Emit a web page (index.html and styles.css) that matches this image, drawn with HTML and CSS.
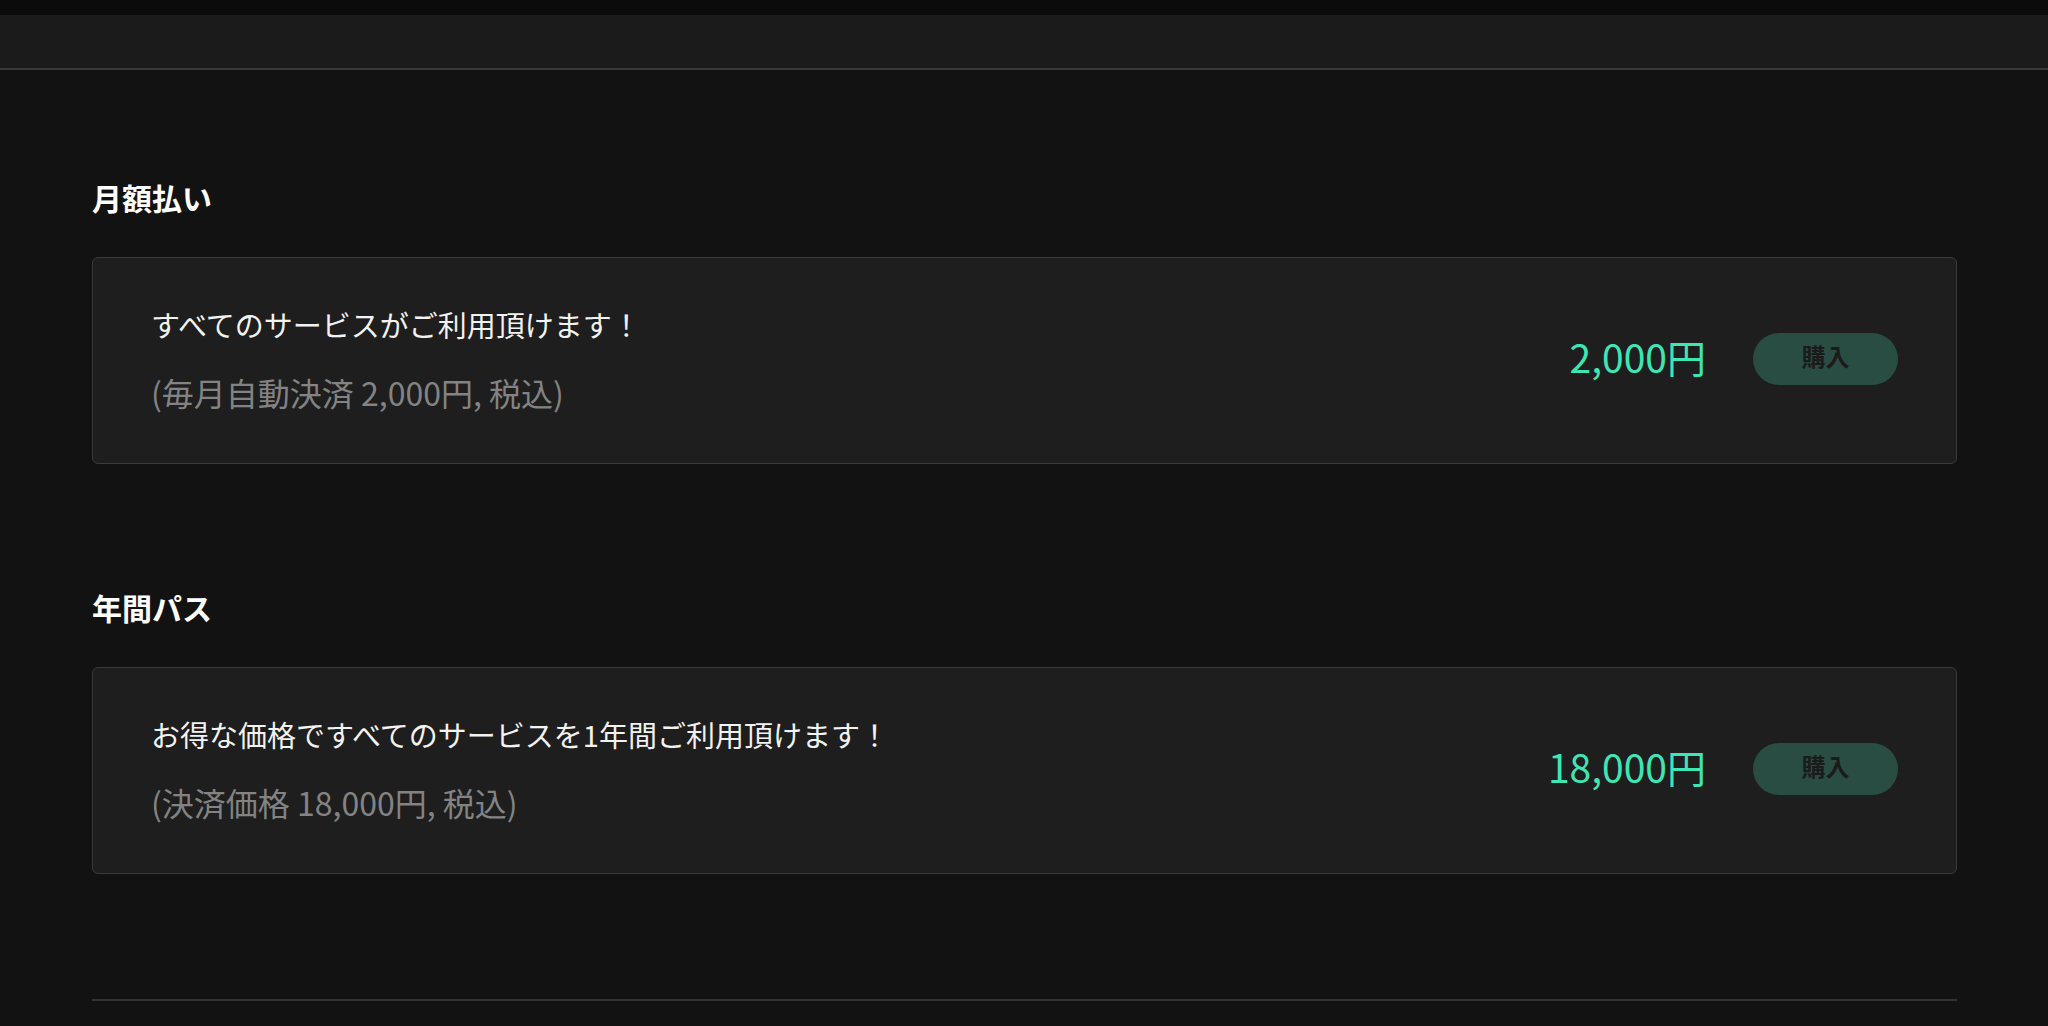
FILE: index.html
```html
<!DOCTYPE html>
<html lang="ja">
<head>
    <meta charset="UTF-8">
    <meta name="viewport" content="width=device-width, initial-scale=1.0">
    <title>プラン</title>
    <link rel="stylesheet" href="styles.css">
</head>
<body>
    <div class="topbar"></div>
    <div class="header"></div>

    <div class="plans">
        <div class="plan-section">
            <h2>月額払い</h2>
            <div class="plan-card">
                <div class="plan-info">
                    <p class="plan-title">すべてのサービスがご利用頂けます！</p>
                    <p class="plan-note">(毎月自動決済 2,000円, 税込)</p>
                </div>
                <div class="plan-buy">
                    <span class="plan-price">2,000円</span>
                    <button class="buy-btn">購入</button>
                </div>
            </div>
        </div>

        <div class="plan-section">
            <h2>年間パス</h2>
            <div class="plan-card">
                <div class="plan-info">
                    <p class="plan-title">お得な価格ですべてのサービスを1年間ご利用頂けます！</p>
                    <p class="plan-note">(決済価格 18,000円, 税込)</p>
                </div>
                <div class="plan-buy">
                    <span class="plan-price">18,000円</span>
                    <button class="buy-btn">購入</button>
                </div>
            </div>
        </div>

        <hr class="divider">
    </div>
</body>
</html>
```

FILE: styles.css
```css
body {
    font-family: "Noto Sans CJK JP", "Noto Sans", sans-serif;
    margin: 0;
    padding: 0;
    background-color: #121212;
    color: #ffffff;
    min-height: 100vh;
}

.topbar {
    height: 15px;
    background-color: #0b0b0b;
}

.header {
    height: 53px;
    background-color: #1b1b1b;
    border-bottom: 2px solid #3a3a3a;
}

.plans {
    padding: 107px 91px 0 92px;
}

.plan-section + .plan-section {
    margin-top: 123px;
}

    .plan-section h2 {
        margin: 0 0 40px;
        font-size: 30px;
        line-height: 40px;
        font-weight: 700;
        color: #ffffff;
    }

.plan-card {
    display: flex;
    align-items: center;
    justify-content: space-between;
    padding: 46px 58px 49px;
    background-color: #1e1e1e;
    border: 1px solid #3a3a3a;
    border-radius: 6px;
}

    .plan-card p {
        margin: 0;
    }

.plan-title {
    font-size: 29px;
    line-height: 40px;
    color: #f2f2f2;
}

.plan-note {
    margin-top: 26px !important;
    font-size: 32px;
    line-height: 44px;
    color: #838383;
}

.plan-buy {
    display: flex;
    align-items: center;
    gap: 47px;
}

.plan-price {
    padding-bottom: 6px;
    font-size: 39px;
    line-height: 50px;
    color: #3fe6b5;
}

.buy-btn {
    width: 145px;
    height: 52px;
    padding: 0 0 8px;
    border: none;
    border-radius: 26px;
    background-color: #2a4d43;
    color: #1b1b1b;
    font-family: inherit;
    font-size: 24px;
    font-weight: 700;
    cursor: pointer;
}

    .buy-btn:hover {
        background-color: #31594e;
    }

.divider {
    margin: 125px 0 0;
    border: none;
    border-top: 2px solid #333333;
}
```
